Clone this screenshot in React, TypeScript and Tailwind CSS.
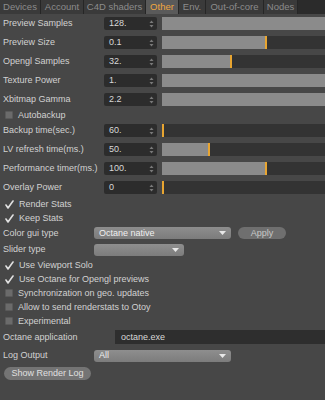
import type { ReactNode } from "react";

const font = { fontFamily: '"Liberation Sans", Arial, sans-serif' };

const tabs = [
  { t: "Devices", w: "w-[41px]" },
  { t: "Account", w: "w-[43px]" },
  { t: "C4D shaders", w: "w-[62px]" },
  { t: "Other", w: "w-[33px]" },
  { t: "Env.", w: "w-[27px]" },
  { t: "Out-of-core", w: "w-[58px]" },
  { t: "Nodes", w: "w-[34px]" },
];

function Spin() {
  return (
    <svg width="5" height="8" viewBox="0 0 5 8" className="shrink-0">
      <path d="M2.5 0.5 L4.5 3 L0.5 3 Z" fill="#7a7a7a" />
      <path d="M2.5 7.5 L4.5 5 L0.5 5 Z" fill="#7a7a7a" />
    </svg>
  );
}

function Arrow() {
  return (
    <svg width="7" height="4" viewBox="0 0 7 4" className="shrink-0">
      <path d="M0 0 L7 0 L3.5 4 Z" fill="#e8e8e8" />
    </svg>
  );
}

function Check() {
  return (
    <svg width="9" height="9" viewBox="0 0 9 9" className="shrink-0">
      <path d="M1 5 L3 8 L8 1" stroke="#e0e0e0" strokeWidth="1.6" fill="none" strokeLinecap="round" strokeLinejoin="round" />
    </svg>
  );
}

function Box() {
  return <span className="w-[8px] h-[8px] shrink-0 rounded-[1px] bg-[#6b6b6b] border border-[#5a5a5a]" />;
}

function NumRow({ label, value, fill }: { label: string; value: string; fill: number }) {
  return (
    <div className="h-[19px] flex items-center">
      <span className="w-[101px] shrink-0 whitespace-nowrap">{label}</span>
      <div className="w-[53px] h-[13px] shrink-0 rounded-[2px] bg-[#2c2c2c] flex items-center justify-between pl-[5px] pr-[3px] text-[#d8d8d8]">
        <span>{value}</span>
        <Spin />
      </div>
      <div className="ml-[5px] flex-1 h-[13px] bg-[#333333] flex">
        <div className="h-full bg-[#8b8b8b]" style={{ width: `${fill}%` }} />
        {fill < 100 && <div className="w-[2px] h-full bg-[#e8a531]" />}
      </div>
    </div>
  );
}

function CheckRow({ label, checked, h = "h-[14px]" }: { label: string; checked?: boolean; h?: string }) {
  return (
    <div className={`${h} flex items-center gap-[5px] pl-[2px]`}>
      {checked ? <Check /> : <Box />}
      <span>{label}</span>
    </div>
  );
}

function Drop({ w, children }: { w: string; children?: ReactNode }) {
  return (
    <div className={`${w} h-[12px] rounded-[3px] bg-gradient-to-b from-[#8e8e8e] to-[#7c7c7c] flex items-center justify-between pl-[5px] pr-[5px] text-[#f0f0f0]`}>
      <span>{children}</span>
      <Arrow />
    </div>
  );
}

export default function App() {
  return (
    <div style={font} className="w-[325px] h-[400px] overflow-hidden bg-[#474747] text-[#d2d2d2] text-[9px] leading-none">
      <div className="h-[14px] flex bg-[#2b2b2b] text-[#8c8c8c] text-[9.5px]">
        {tabs.map(({ t, w }) => (
          <div
            key={t}
            className={
              t === "Other"
                ? `${w} flex items-center justify-center bg-[#5a5a5a] text-[#f0a640] border-r border-[#262626]`
                : `${w} flex items-center justify-center bg-[#3a3a3a] border-r border-[#262626]`
            }
          >
            {t}
          </div>
        ))}
      </div>

      <div className="pl-[3px]">
        <NumRow label="Preview Samples" value="128." fill={100} />
        <NumRow label="Preview Size" value="0.1" fill={63} />
        <NumRow label="Opengl Samples" value="32." fill={42} />
        <NumRow label="Texture Power" value="1." fill={100} />
        <NumRow label="Xbitmap Gamma" value="2.2" fill={100} />
        <CheckRow label="Autobackup" h="h-[12px]" />
        <NumRow label="Backup time(sec.)" value="60." fill={0} />
        <NumRow label="LV refresh time(ms.)" value="50." fill={28} />
        <NumRow label="Performance timer(ms.)" value="100." fill={63} />
        <NumRow label="Overlay Power" value="0" fill={0} />

        <CheckRow label="Render Stats" checked />
        <CheckRow label="Keep Stats" checked />

        <div className="h-[16px] flex items-center">
          <span className="w-[91px] shrink-0">Color gui type</span>
          <Drop w="w-[137px]">Octane native</Drop>
          <div className="ml-[7px] w-[48px] h-[12px] rounded-full bg-[#6f6f6f] flex items-center justify-center text-[#c8c8c8]">
            Apply
          </div>
        </div>
        <div className="h-[17px] flex items-center">
          <span className="w-[91px] shrink-0">Slider type</span>
          <Drop w="w-[90px]" />
        </div>

        <CheckRow label="Use Viewport Solo" checked />
        <CheckRow label="Use Octane for Opengl previews" checked />
        <CheckRow label="Synchronization on geo. updates" />
        <CheckRow label="Allow to send renderstats to Otoy" />
        <CheckRow label="Experimental" />

        <div className="h-[18px] flex items-center">
          <span className="w-[112px] shrink-0">Octane application</span>
          <div className="flex-1 h-[14px] bg-[#2e2e2e] flex items-center pl-[6px] text-[#d8d8d8]">octane.exe</div>
        </div>
        <div className="h-[19px] flex items-center">
          <span className="w-[91px] shrink-0">Log Output</span>
          <Drop w="w-[137px]">All</Drop>
        </div>
        <div className="h-[16px] flex items-center pl-[1px]">
          <div className="w-[87px] h-[13px] rounded-full bg-[#747474] flex items-center justify-center text-[#e0e0e0]">
            Show Render Log
          </div>
        </div>
      </div>
    </div>
  );
}
